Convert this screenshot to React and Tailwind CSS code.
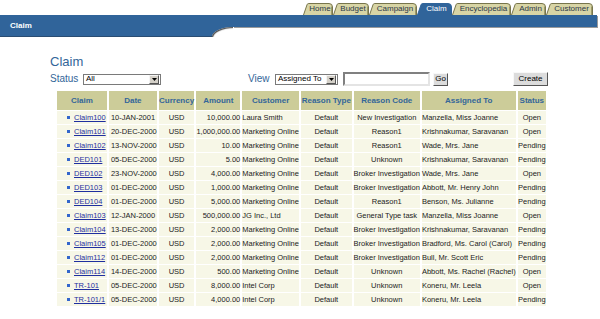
import React from "react";

const tabs = [
  { label: "Home", w: 30, cls: "w-[30px]" },
  { label: "Budget", w: 36, cls: "w-[36px]" },
  { label: "Campaign", w: 48, cls: "w-[48px]" },
  { label: "Claim", w: 35, cls: "w-[35px]", active: true },
  { label: "Encyclopedia", w: 59, cls: "w-[59px]" },
  { label: "Admin", w: 35, cls: "w-[35px]" },
  { label: "Customer", w: 47, cls: "w-[47px]" },
];

const rows = [
  ["Claim100", "10-JAN-2001", "USD", "10,000.00", "Laura Smith", "Default", "New Investigation", "Manzella, Miss Joanne", "Open"],
  ["Claim101", "20-DEC-2000", "USD", "1,000,000.00", "Marketing Online", "Default", "Reason1", "Krishnakumar, Saravanan", "Open"],
  ["Claim102", "13-NOV-2000", "USD", "10.00", "Marketing Online", "Default", "Reason1", "Wade, Mrs. Jane", "Pending"],
  ["DED101", "05-DEC-2000", "USD", "5.00", "Marketing Online", "Default", "Unknown", "Krishnakumar, Saravanan", "Pending"],
  ["DED102", "23-NOV-2000", "USD", "4,000.00", "Marketing Online", "Default", "Broker Investigation", "Wade, Mrs. Jane", "Open"],
  ["DED103", "01-DEC-2000", "USD", "1,000.00", "Marketing Online", "Default", "Broker Investigation", "Abbott, Mr. Henry John", "Pending"],
  ["DED104", "01-DEC-2000", "USD", "5,000.00", "Marketing Online", "Default", "Reason1", "Benson, Ms. Julianne", "Pending"],
  ["Claim103", "12-JAN-2000", "USD", "500,000.00", "JG Inc., Ltd", "Default", "General Type task", "Manzella, Miss Joanne", "Open"],
  ["Claim104", "13-DEC-2000", "USD", "2,000.00", "Marketing Online", "Default", "Broker Investigation", "Krishnakumar, Saravanan", "Pending"],
  ["Claim105", "01-DEC-2000", "USD", "2,000.00", "Marketing Online", "Default", "Broker Investigation", "Bradford, Ms. Carol (Carol)", "Pending"],
  ["Claim112", "01-DEC-2000", "USD", "2,000.00", "Marketing Online", "Default", "Broker Investigation", "Bull, Mr. Scott Eric", "Pending"],
  ["Claim114", "14-DEC-2000", "USD", "500.00", "Marketing Online", "Default", "Unknown", "Abbott, Ms. Rachel (Rachel)", "Open"],
  ["TR-101", "05-DEC-2000", "USD", "8,000.00", "Intel Corp", "Default", "Unknown", "Koneru, Mr. Leela", "Open"],
  ["TR-101/1", "05-DEC-2000", "USD", "4,000.00", "Intel Corp", "Default", "Unknown", "Koneru, Mr. Leela", "Pending"],
];

const headers = [
  { t: "Claim", cls: "w-[51px]" },
  { t: "Date", cls: "w-[47px]" },
  { t: "Currency", cls: "w-[36px]" },
  { t: "Amount", cls: "w-[44px]" },
  { t: "Customer", cls: "w-[54px]" },
  { t: "Reason Type", cls: "w-[52px]" },
  { t: "Reason Code", cls: "w-[66px]" },
  { t: "Assigned To", cls: "w-[92px]" },
  { t: "Status", cls: "w-[29px]" },
];

const cellAlign = [
  "text-left",
  "text-left pl-[2px]",
  "text-center",
  "text-right",
  "text-left",
  "text-center",
  "text-center",
  "text-left",
  "text-center",
];

function Tab({ t }) {
  const w = t.w;
  const d = `M0.5 12 L4 1.8 Q4.4 0.5 5.8 0.5 L${w - 4} 0.5 Q${w - 0.5} 0.5 ${w - 0.5} 4 L${w - 0.5} 12`;
  return (
    <div className={`relative h-[12px] ${t.cls} flex items-center justify-center pl-[4px]`}>
      <svg className="absolute inset-0" width={w} height="12" viewBox={`0 0 ${w} 12`}>
        <path d={d} fill={t.active ? "#30649a" : "#d8d5a5"} stroke={t.active ? "#30649a" : "#77754c"} strokeWidth="1" />
        {!t.active && <path d={`M${w - 1.5} 3.5 L${w - 1.5} 12`} stroke="#9d9a6a" strokeWidth="1" />}
      </svg>
      <span className={`relative text-[8px] leading-none ${t.active ? "text-white" : "text-[#2b3848]"}`}>{t.label}</span>
    </div>
  );
}

function Arrow() {
  return (
    <span className="w-[10px] h-[9px] mr-[1px] bg-[#d4d0c8] border border-t-[#f4f4f4] border-l-[#f4f4f4] border-b-[#555] border-r-[#555] flex items-center justify-center">
      <svg width="5" height="3" viewBox="0 0 5 3">
        <path d="M0 0 L5 0 L2.5 3 Z" fill="#000" />
      </svg>
    </span>
  );
}

export default function App() {
  return (
    <div className="w-[600px] h-[319px] bg-white overflow-hidden font-['Liberation_Sans',Arial,sans-serif]">
      {/* tabs */}
      <div className="h-[15px] flex justify-end items-end pr-[7px]">
        {tabs.map((t) => (
          <Tab key={t.label} t={t} />
        ))}
      </div>
      {/* blue bar */}
      <div className="flex mr-[3px]">
        <div className="w-[212px] h-[22px] bg-[#30649a] border-b border-b-[#2a4d72] flex items-center pl-[10px]">
          <span className="text-white text-[8px] font-bold">Claim</span>
        </div>
        <div className="w-[21px] h-[22px] bg-[#30649a] flex flex-col justify-end">
          <div className="h-[10px] w-full bg-white rounded-tl-[21px_10px] shadow-[inset_1px_1px_1px_#4a4a4a]" />
        </div>
        <div className="flex-1 h-[12px] bg-[#30649a] shadow-[1px_1px_0_#9a9a9a]" />
      </div>

      {/* body */}
      <div className="pl-[50px] pr-[52px]">
        <div className="mt-[17px] h-[15px] text-[13px] leading-[15px] text-[#336699]">Claim</div>
        <div className="mt-[3px] h-[14px] flex items-center">
          <span className="text-[10px] leading-none text-[#336699] w-[33px]">Status</span>
          <div className="w-[78px] h-[11px] flex items-center border border-[#7a7a7a] bg-white">
            <span className="flex-1 pl-[2px] text-[8px] leading-none text-black">All</span>
            <Arrow />
          </div>
          <span className="ml-[87px] text-[10px] leading-none text-[#336699] w-[27px]">View</span>
          <div className="w-[63px] h-[11px] flex items-center border border-[#7a7a7a] bg-white">
            <span className="flex-1 pl-[2px] text-[8px] leading-none text-black whitespace-nowrap">Assigned To</span>
            <Arrow />
          </div>
          <div className="ml-[5px] w-[87px] h-[14px] bg-white border-2 border-t-[#808080] border-l-[#808080] border-b-[#e4e4e4] border-r-[#e4e4e4]" />
          <div className="ml-[3px] w-[15px] h-[13px] bg-[#dcdcdc] border border-t-[#f8f8f8] border-l-[#f8f8f8] border-b-[#555] border-r-[#555] flex items-center justify-center text-[8px] leading-none text-black">
            Go
          </div>
          <div className="ml-auto w-[35px] h-[14px] bg-[#dcdcdc] border border-t-[#f8f8f8] border-l-[#f8f8f8] border-b-[#555] border-r-[#555] flex items-center justify-center text-[8px] leading-none text-black">
            Create
          </div>
        </div>

        <table className="mt-[4px] ml-[5px] border-separate border-spacing-x-[2px] border-spacing-y-[1px] table-fixed">
          <thead>
            <tr>
              {headers.map((h) => (
                <th
                  key={h.t}
                  className={`${h.cls} h-[19px] p-0 bg-[#cccc99] text-[8px] leading-none font-bold text-[#336699] text-center whitespace-nowrap`}
                >
                  {h.t}
                </th>
              ))}
            </tr>
          </thead>
          <tbody>
            {rows.map((r) => (
              <tr key={r[0]}>
                {r.map((c, i) => (
                  <td
                    key={i}
                    className={`h-[13px] p-0 bg-[#f7f7e7] text-[7.5px] leading-[13px] text-[#222] whitespace-nowrap overflow-visible ${cellAlign[i]}`}
                  >
                    {i === 0 ? (
                      <span className="flex items-center pl-[10px]">
                        <span className="w-[3px] h-[3px] bg-[#3366cc]" />
                        <span className="ml-[4px] text-[#1f2fa0] underline">{c}</span>
                      </span>
                    ) : (
                      c
                    )}
                  </td>
                ))}
              </tr>
            ))}
          </tbody>
        </table>
      </div>
    </div>
  );
}
